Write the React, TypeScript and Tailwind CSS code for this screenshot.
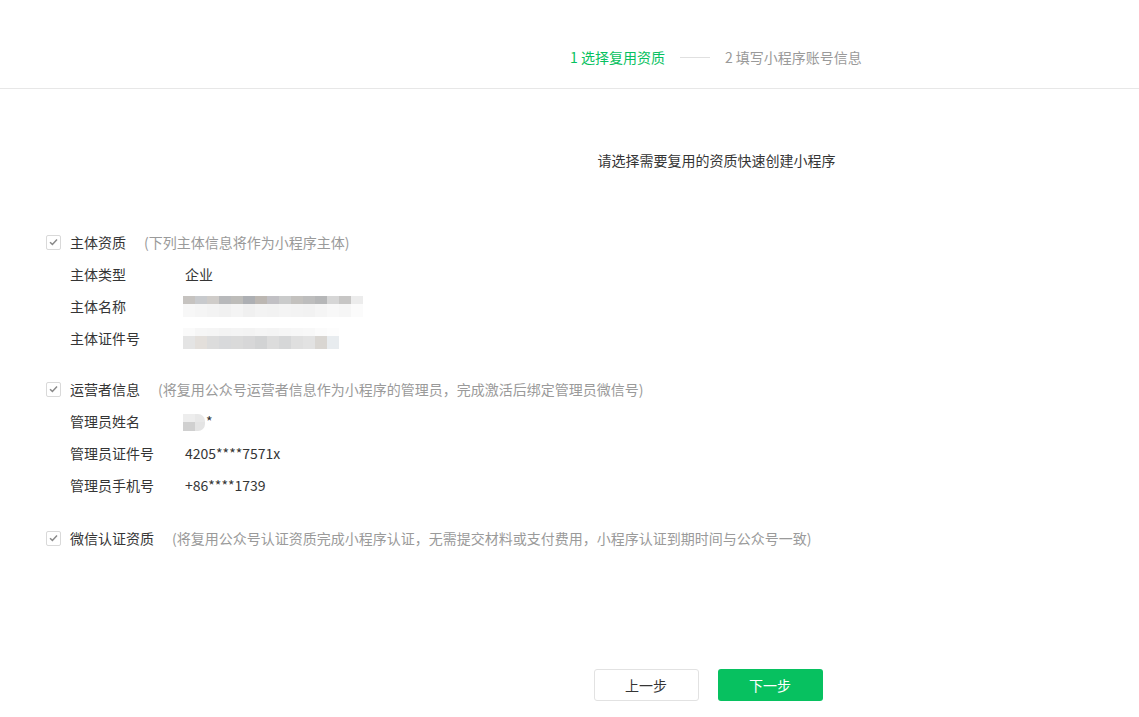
import React from "react";

const nameTop = [
  "bg-[#c6c3c0]", "bg-[#c8cacd]", "bg-[#cfccc9]", "bg-[#b8b9bb]", "bg-[#bdbcb9]",
  "bg-[#adafb3]", "bg-[#bcb7b2]", "bg-[#c1c0c4]", "bg-[#cacbcb]", "bg-[#c3c1be]",
  "bg-[#bdbdbd]", "bg-[#b6b7b8]", "bg-[#d6d6d6]", "bg-[#c7c6c5]", "bg-[#ececec]",
];
const nameBottom = [
  "bg-[#f7f7f7]", "bg-[#f5f5f5]", "bg-[#f3f3f3]", "bg-[#f1f1f1]", "bg-[#f4f4f4]",
  "bg-[#f0f0f0]", "bg-[#f3f3f3]", "bg-[#f2f2f2]", "bg-[#f4f4f4]", "bg-[#f3f3f3]",
  "bg-[#f2f2f2]", "bg-[#f5f5f5]", "bg-[#f8f8f8]", "bg-[#f6f6f6]", "bg-[#fbfbfb]",
];
const idTop = [
  "bg-[#fafafa]", "bg-[#f6f6f6]", "bg-[#f5f5f5]", "bg-[#f3f3f3]", "bg-[#f4f4f4]",
  "bg-[#f3f3f3]", "bg-[#f5f5f5]", "bg-[#f4f4f4]", "bg-[#f6f6f6]", "bg-[#f7f7f7]",
  "bg-[#f8f8f8]", "bg-[#fbfbfb]", "bg-[#fdfdfd]",
];
const idBottom = [
  "bg-[#e4e4e4]", "bg-[#e3dfdb]", "bg-[#dcdcdc]", "bg-[#d8d9db]", "bg-[#dadada]",
  "bg-[#d7d7d8]", "bg-[#d2d3d4]", "bg-[#dcdcdc]", "bg-[#d6d7d8]", "bg-[#dfdfdf]",
  "bg-[#e2e2e2]", "bg-[#d9d6d2]", "bg-[#e8ecef]",
];

function Mosaic({ top, bottom }: { top: string[]; bottom: string[] }) {
  return (
    <div className="flex flex-col">
      <div className="flex">
        {top.map((c, i) => (
          <div key={i} className={`h-[8px] w-[12px] ${c}`} />
        ))}
      </div>
      <div className="flex">
        {bottom.map((c, i) => (
          <div key={i} className={`h-[13px] w-[12px] ${c}`} />
        ))}
      </div>
    </div>
  );
}

function Check() {
  return (
    <span className="flex h-[15px] w-[15px] items-center justify-center rounded-[2px] border border-[#d9d9d9] bg-white">
      <svg width="9" height="8" viewBox="0 0 9 8" fill="none">
        <path d="M1 4.2 L3.4 6.4 L8 1.4" stroke="#8a8a8a" strokeWidth="1.5" />
      </svg>
    </span>
  );
}

function SectionHead({ title, desc }: { title: string; desc: string }) {
  return (
    <div className="flex h-8 items-center">
      <Check />
      <span className="ml-[9px] text-[#353535]">{title}</span>
      <span className="ml-[18px] text-[#9a9a9a]">{desc}</span>
    </div>
  );
}

function Row({ label, children }: { label: string; children: React.ReactNode }) {
  return (
    <div className="flex h-8 items-center pl-[24px]">
      <span className="w-[115px] text-[#353535]">{label}</span>
      {children}
    </div>
  );
}

export default function App() {
  return (
    <div
      className="min-h-[717px] bg-white text-[14px] text-[#353535]"
      style={{ fontFamily: '"Noto Sans CJK SC", "Liberation Sans", sans-serif' }}
    >
      <div className="h-[89px] border-b border-[#e7e7e7] pt-[41px]">
        <div className="flex h-8 items-center pl-[570px]">
          <span className="text-[#07c160]">1 选择复用资质</span>
          <span className="mx-[15px] h-px w-[30px] bg-[#e0e0e0]" />
          <span className="text-[#9a9a9a]">2 填写小程序账号信息</span>
        </div>
      </div>

      <div className="mt-[55px] flex h-8 items-center justify-center pl-[294px] text-[#353535]">
        请选择需要复用的资质快速创建小程序
      </div>

      <div className="mt-[50px] pl-[46px]">
        <SectionHead title="主体资质" desc="(下列主体信息将作为小程序主体)" />
        <Row label="主体类型">
          <span>企业</span>
        </Row>
        <Row label="主体名称">
          <div className="-ml-[2px]">
            <Mosaic top={nameTop} bottom={nameBottom} />
          </div>
        </Row>
        <Row label="主体证件号">
          <div className="-ml-[2px]">
            <Mosaic top={idTop} bottom={idBottom} />
          </div>
        </Row>

        <div className="mt-[19px]">
          <SectionHead
            title="运营者信息"
            desc="(将复用公众号运营者信息作为小程序的管理员，完成激活后绑定管理员微信号)"
          />
          <Row label="管理员姓名">
            <div className="-ml-[2px] flex items-start pt-[2px]">
              <div className="flex">
                <div className="flex flex-col">
                  <div className="h-[8px] w-[12px] bg-[#ededed]" />
                  <div className="h-[9px] w-[12px] bg-[#d0d0d0]" />
                </div>
                <div className="flex flex-col">
                  <div className="h-[8px] w-[10px] rounded-tr-[7px] bg-[#e8e8e8]" />
                  <div className="h-[9px] w-[10px] rounded-br-[7px] bg-[#e4e4e4]" />
                </div>
              </div>
              <span className="ml-[1px] leading-none">*</span>
            </div>
          </Row>
          <Row label="管理员证件号">
            <span>4205****7571x</span>
          </Row>
          <Row label="管理员手机号">
            <span>+86****1739</span>
          </Row>
        </div>

        <div className="mt-[21px]">
          <SectionHead
            title="微信认证资质"
            desc="(将复用公众号认证资质完成小程序认证，无需提交材料或支付费用，小程序认证到期时间与公众号一致)"
          />
        </div>
      </div>

      <div className="mt-[115px] flex justify-center gap-[19px] pl-[277px]">
        <button className="h-8 w-[105px] rounded-[3px] border border-[#e2e2e2] bg-white text-[#353535]">
          上一步
        </button>
        <button className="h-8 w-[105px] rounded-[3px] bg-[#07c160] text-white">
          下一步
        </button>
      </div>
    </div>
  );
}
